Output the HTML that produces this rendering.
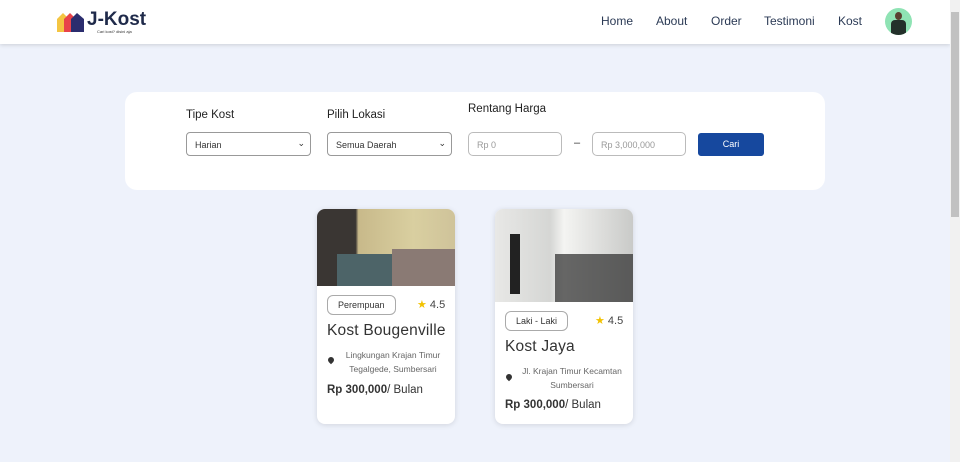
<!DOCTYPE html>
<html><head><style>
*{box-sizing:border-box;margin:0;padding:0}
body{width:960px;height:462px;overflow:hidden;background:#eef2fb;font-family:"Liberation Sans",sans-serif;position:relative;color:#333}
.nav{position:absolute;left:0;top:0;width:950px;height:44px;background:#fff;box-shadow:0 1px 4px rgba(0,0,0,.15)}
.sb{position:absolute;right:0;top:0;width:10px;height:462px;background:#f1f1f1}
.sb div{position:absolute;left:1px;top:12px;width:8px;height:205px;background:#c1c1c1}
.nl{position:absolute;top:14px;font-size:12px;color:#2b3a55}
.box{position:absolute;left:125px;top:92px;width:700px;height:98px;background:#fff;border-radius:12px}
.lbl{position:absolute;font-size:11.5px;color:#222}
.sel,.inp{position:absolute;top:132px;height:24px;border:1px solid #999;border-radius:4px;font-size:9px;padding:7px 8px;background:#fff}
.inp{border-color:#bbb;color:#999;border-radius:5px}
.card{position:absolute;background:#fff;border-radius:8px;box-shadow:0 1px 6px rgba(0,0,0,.12);overflow:hidden}
.tag{position:absolute;border:1px solid #aaa;border-radius:6px;font-size:9px;padding:4px 10px;color:#333}
.rate{position:absolute;font-size:11px;color:#444}
.rate b{color:#f2c200;font-weight:normal}
.title{position:absolute;font-size:15.5px;color:#333;letter-spacing:.2px}
.addr{position:absolute;font-size:8.5px;color:#666;text-align:center;line-height:14px}
.pin{position:absolute;width:6px;height:6px;background:#333;border-radius:50% 50% 50% 0;transform:rotate(-45deg)}
.price{position:absolute;font-size:11.5px;color:#333}
</style></head><body>
<div class="nav">
 <svg style="position:absolute;left:57px;top:11px" width="27" height="21"><path d="M0 8L6 2 12 8V21H0Z" fill="#f4c542"/><path d="M7 8L13 2 19 8V21H7Z" fill="#e8434a"/><path d="M14 8L20 2 27 8V21H14Z" fill="#2b2d6e"/></svg>
 <div style="position:absolute;left:87px;top:9px;font-size:19px;font-weight:bold;color:#1f2a4a">J-Kost</div>
 <div style="position:absolute;left:97px;top:29px;font-size:4px;color:#333">Cari kost? disini aja</div>
 <div class="nl" style="left:601px">Home</div>
 <div class="nl" style="left:656px">About</div>
 <div class="nl" style="left:711px">Order</div>
 <div class="nl" style="left:764px">Testimoni</div>
 <div class="nl" style="left:838px">Kost</div>
 <div style="position:absolute;left:885px;top:8px;width:27px;height:27px;border-radius:50%;background:#8fe3b4;overflow:hidden"><div style="position:absolute;left:6px;top:12px;width:15px;height:16px;background:#23302a;border-radius:4px 4px 0 0"></div><div style="position:absolute;left:10px;top:4px;width:7px;height:8px;background:#5a4030;border-radius:50%"></div></div>
</div>
<div class="sb"><div></div></div>
<div class="box"></div>
<div class="lbl" style="left:186px;top:109px">Tipe Kost</div>
<div class="lbl" style="left:327px;top:109px">Pilih Lokasi</div>
<div class="lbl" style="left:468px;top:103px">Rentang Harga</div>
<div class="sel" style="left:186px;width:125px">Harian<span style="position:absolute;right:5px;top:5px;font-size:9px">⌄</span></div>
<div class="sel" style="left:327px;width:125px">Semua Daerah<span style="position:absolute;right:5px;top:5px;font-size:9px">⌄</span></div>
<div class="inp" style="left:468px;width:94px">Rp 0</div>
<div style="position:absolute;left:574px;top:137px;font-size:11px">–</div>
<div class="inp" style="left:592px;width:94px">Rp 3,000,000</div>
<div style="position:absolute;left:698px;top:133px;width:66px;height:23px;background:#16489e;border-radius:3px;color:#fff;font-size:9px;text-align:center;line-height:23px">Cari</div>

<div class="card" style="left:317px;top:209px;width:138px;height:215px">
 <div style="position:absolute;left:0;top:0;width:138px;height:77px;background:linear-gradient(90deg,#3a3633 0,#3a3633 28%,#c8b98a 30%,#d9cfa0 70%,#cfc39a);"></div>
 <div style="position:absolute;left:20px;top:45px;width:118px;height:32px;background:#4d6468"></div>
 <div style="position:absolute;left:75px;top:40px;width:63px;height:37px;background:#8a7a74"></div>
 <div class="tag" style="left:10px;top:86px">Perempuan</div>
 <div class="rate" style="left:100px;top:89px"><b>★</b> 4.5</div>
 <div class="title" style="left:10px;top:113px">Kost Bougenville</div>
 <div class="pin" style="left:11px;top:148px"></div>
 <div class="addr" style="left:22px;top:139px;width:108px">Lingkungan Krajan Timur Tegalgede, Sumbersari</div>
 <div class="price" style="left:10px;top:175px"><b>Rp 300,000</b>/ Bulan</div>
</div>
<div class="card" style="left:495px;top:209px;width:138px;height:215px">
 <div style="position:absolute;left:0;top:0;width:138px;height:93px;background:linear-gradient(90deg,#e8e8e6,#d5d6d4 40%,#f4f4f2 50%,#c9cac8)"></div>
 <div style="position:absolute;left:60px;top:45px;width:78px;height:48px;background:#2a2a2a;opacity:.7"></div>
 <div style="position:absolute;left:15px;top:25px;width:10px;height:60px;background:#222"></div>
 <div class="tag" style="left:10px;top:102px">Laki - Laki</div>
 <div class="rate" style="left:100px;top:105px"><b>★</b> 4.5</div>
 <div class="title" style="left:10px;top:129px">Kost Jaya</div>
 <div class="pin" style="left:11px;top:165px"></div>
 <div class="addr" style="left:22px;top:155px;width:110px">Jl. Krajan Timur Kecamtan Sumbersari</div>
 <div class="price" style="left:10px;top:190px"><b>Rp 300,000</b>/ Bulan</div>
</div>
</body></html>
